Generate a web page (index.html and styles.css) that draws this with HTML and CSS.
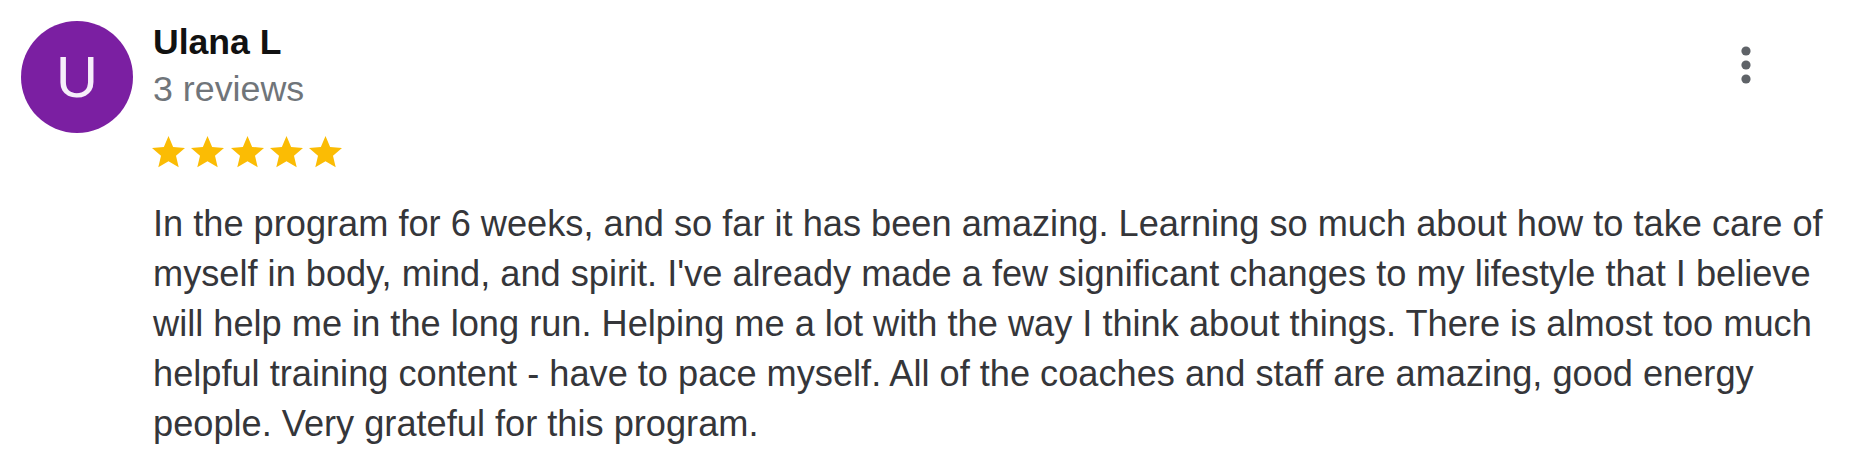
FILE: index.html
```html
<!DOCTYPE html>
<html lang="en">
<head>
<meta charset="utf-8">
<title>Review</title>
<link rel="stylesheet" href="styles.css">
</head>
<body>
<div class="review">
  <div class="avatar">U</div>
  <div class="content">
    <div class="header">
      <div class="author">
        <div class="name">Ulana L</div>
        <div class="count">3 reviews</div>
      </div>
      <button class="menu" aria-label="More">
        <svg width="10" height="38" viewBox="0 0 10 38"><circle cx="5" cy="5" r="4.6"/><circle cx="5" cy="19" r="4.6"/><circle cx="5" cy="33" r="4.6"/></svg>
      </button>
    </div>
    <div class="stars">
      <svg class="star" viewBox="2 2 20 19.27"><path d="M12 17.27L18.18 21l-1.64-7.03L22 9.24l-7.19-.61L12 2 9.19 8.63 2 9.24l5.46 4.73L5.82 21z"/></svg>
      <svg class="star" viewBox="2 2 20 19.27"><path d="M12 17.27L18.18 21l-1.64-7.03L22 9.24l-7.19-.61L12 2 9.19 8.63 2 9.24l5.46 4.73L5.82 21z"/></svg>
      <svg class="star" viewBox="2 2 20 19.27"><path d="M12 17.27L18.18 21l-1.64-7.03L22 9.24l-7.19-.61L12 2 9.19 8.63 2 9.24l5.46 4.73L5.82 21z"/></svg>
      <svg class="star" viewBox="2 2 20 19.27"><path d="M12 17.27L18.18 21l-1.64-7.03L22 9.24l-7.19-.61L12 2 9.19 8.63 2 9.24l5.46 4.73L5.82 21z"/></svg>
      <svg class="star" viewBox="2 2 20 19.27"><path d="M12 17.27L18.18 21l-1.64-7.03L22 9.24l-7.19-.61L12 2 9.19 8.63 2 9.24l5.46 4.73L5.82 21z"/></svg>
    </div>
    <p class="text">In the program for 6 weeks, and so far it has been amazing. Learning so much about how to take care of myself in body, mind, and spirit. I've already made a few significant changes to my lifestyle that I believe will help me in the long run. Helping me a lot with the way I think about things. There is almost too much helpful training content - have to pace myself. All of the coaches and staff are amazing, good energy people. Very grateful for this program.</p>
  </div>
</div>
</body>
</html>
```
FILE: styles.css
```css
html, body {
  margin: 0;
  padding: 0;
  background: #ffffff;
}

body {
  font-family: "Liberation Sans", Arial, sans-serif;
}

.review {
  display: flex;
  align-items: flex-start;
  gap: 20px;
  padding: 21px 25px 0 21px;
}

.avatar {
  flex: none;
  width: 112px;
  height: 112px;
  border-radius: 50%;
  background: #7b1fa2;
  color: #f6eefa;
  font-size: 58px;
  line-height: 112px;
  text-align: center;
}

.content {
  flex: 1;
  min-width: 0;
}

.header {
  display: flex;
  justify-content: space-between;
  align-items: flex-start;
}

.name {
  font-size: 35.6px;
  line-height: 42px;
  font-weight: bold;
  color: #111111;
}

.count {
  margin-top: 5px;
  font-size: 35.8px;
  line-height: 42px;
  color: #70757a;
}

.menu {
  margin: 25px 92px 0 0;
  padding: 0;
  border: 0;
  background: none;
  display: flex;
}

.menu svg {
  fill: #5f6368;
}

.stars {
  display: flex;
  gap: 6.25px;
  margin-top: 26px;
  margin-left: -1px;
}

.star {
  width: 33px;
  height: 31.8px;
  fill: #fbbc04;
}

.text {
  margin: 31px 0 0 0;
  font-size: 36.2px;
  line-height: 50px;
  color: #35363a;
}
```
